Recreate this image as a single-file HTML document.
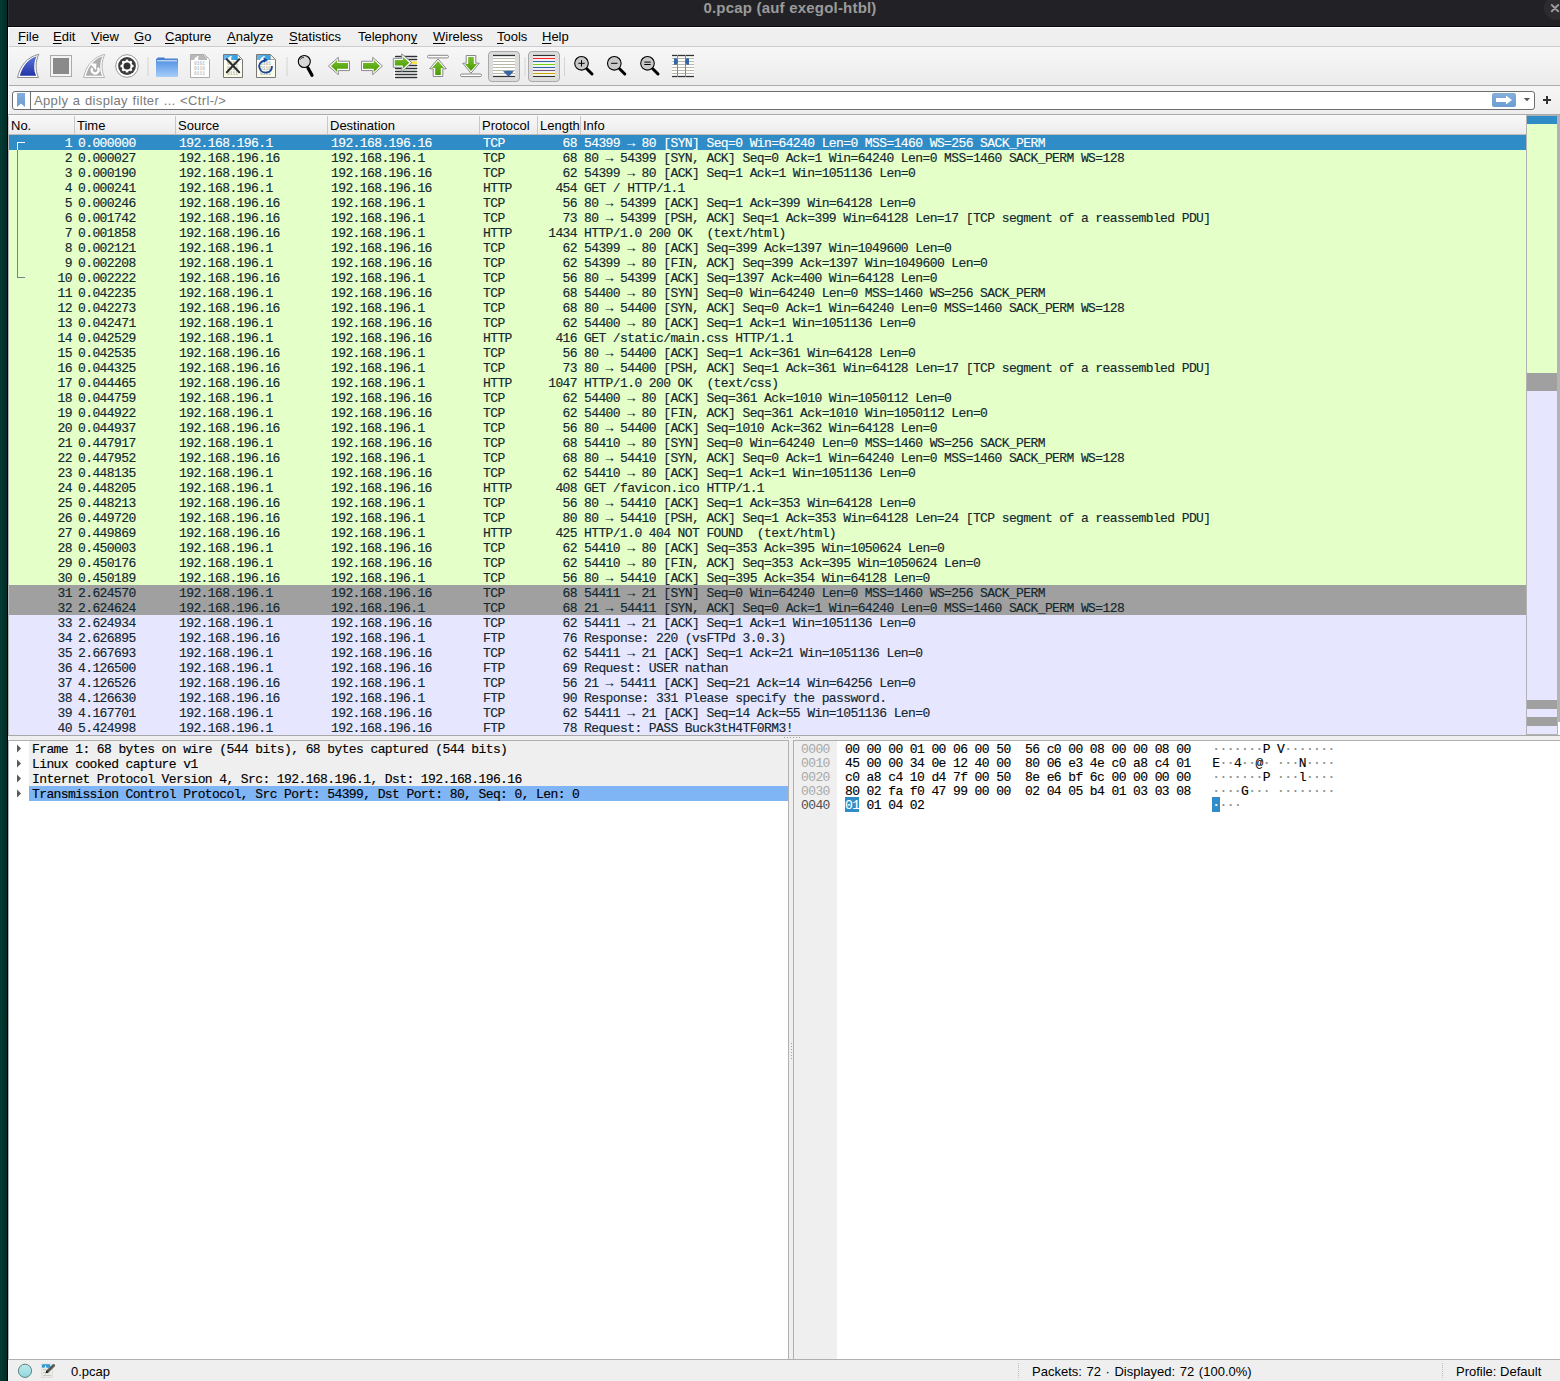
<!DOCTYPE html><html><head><meta charset="utf-8"><title>Wireshark</title><style>
*{margin:0;padding:0;box-sizing:border-box}
html,body{width:1560px;height:1381px;overflow:hidden;background:#efefef;font-family:"Liberation Sans",sans-serif;font-size:13px;color:#000;position:relative}
#edge{position:absolute;left:0;top:0;width:8px;height:1381px;background:linear-gradient(90deg,#043a33 0px,#022c27 7px,#000 7px,#000 8px)}
#wb1{position:absolute;left:8px;top:0;width:1px;height:26px;background:#2f2f33}
#wb2{position:absolute;left:8px;top:27px;width:1px;height:87px;background:#fff}
#titlebar{position:absolute;left:8px;top:0;width:1552px;height:27px;background:#222226;border-bottom:1px solid #0a0a0e}
#title{position:absolute;left:587px;top:-1px;width:390px;text-align:center;font-weight:bold;font-size:15px;letter-spacing:0.2px;line-height:18px;color:#9a9a9a}
#closebtn{position:absolute;left:1536px;top:-4px;width:24px;height:24px;border-radius:12px;background:#2c2c30}
#closebtn svg{position:absolute;left:0;top:4px}
#menubar{position:absolute;left:8px;top:27px;width:1552px;height:19px;background:#efefef;border-top:1px solid #fff}
.mi{position:absolute;top:1px;font-size:13px;line-height:16px;color:#000;margin-left:-8px}
.mi u{text-decoration:underline;text-underline-offset:2px}
#toolbar{position:absolute;left:8px;top:46px;width:1552px;height:40px;background:linear-gradient(#f7f7f7,#ececec);border-top:1px solid #cccccc;border-bottom:1px solid #ababab}
#toolbar .ic{position:absolute}
#plist{position:absolute;left:8px;top:114px;width:1552px;height:622px;background:#fff;border-top:1px solid #aaa}
#phead{position:absolute;left:8px;top:115px;width:1518px;height:20px;background:linear-gradient(#f9f9f9,#ebebeb);border-bottom:1px solid #c4bcb4}
.hc{position:absolute;top:116px;height:18px;border-left:1px solid #c8c8c8;font-size:13px;line-height:19px;padding-left:2px;white-space:nowrap;overflow:hidden}
.row{position:absolute;left:8px;width:1518px;height:15px;font-family:"Liberation Mono",monospace;font-size:13px;letter-spacing:-0.6px;line-height:15px;white-space:pre;color:#12272e;-webkit-text-stroke:0.15px}
.row span{position:absolute;top:1px}
.row.g{background:#e4ffc7}
.row.t{background:#e7e6ff}
.row.s{background:#a0a0a0}
.row.sel{background:#308cc6;color:#fff}
.cno{right:1454px;text-align:right}
.ct{left:70px}.cs{left:171px}.cd{left:323px}.cp{left:475px}
.cl{right:949px;text-align:right}
.ci{left:576px}
.brk{position:absolute}
.dt{position:absolute;padding-top:1px;left:32px;height:15px;font-family:"Liberation Mono",monospace;font-size:13px;letter-spacing:-0.6px;line-height:15px;white-space:pre;color:#000;-webkit-text-stroke:0.15px}
.off{position:absolute;padding-top:1px;left:801px;height:14px;font-family:"Liberation Mono",monospace;font-size:13px;letter-spacing:-0.6px;line-height:15px;white-space:pre;color:#a8a8a8}
.hx{position:absolute;padding-top:1px;left:845px;height:14px;font-family:"Liberation Mono",monospace;font-size:13px;letter-spacing:-0.6px;line-height:15px;white-space:pre;color:#000;-webkit-text-stroke:0.15px}
.hx i{font-style:normal;color:#8a8a8a}
.hx b{font-weight:normal}
.st{position:absolute;top:1363px;font-size:13px;line-height:17px;color:#000;white-space:pre}
.row b.ar{position:static;font-weight:bold}

</style></head><body>
<div id="edge"></div>
<div id="titlebar"><div id="title">0.pcap (auf exegol-htbl)</div><div id="closebtn"><svg width="24" height="24" viewBox="0 0 24 24"><path d="M7.8 5 L14.2 11.2 M14.2 5 L7.8 11.2" stroke="#9a9a9a" stroke-width="2" stroke-linecap="round"/></svg></div></div>
<div id="menubar">
<span class="mi" style="left:18px"><u>F</u>ile</span>
<span class="mi" style="left:53px"><u>E</u>dit</span>
<span class="mi" style="left:91px"><u>V</u>iew</span>
<span class="mi" style="left:134px"><u>G</u>o</span>
<span class="mi" style="left:165px"><u>C</u>apture</span>
<span class="mi" style="left:227px"><u>A</u>nalyze</span>
<span class="mi" style="left:289px"><u>S</u>tatistics</span>
<span class="mi" style="left:358px">Telephon<u>y</u></span>
<span class="mi" style="left:433px"><u>W</u>ireless</span>
<span class="mi" style="left:497px"><u>T</u>ools</span>
<span class="mi" style="left:542px"><u>H</u>elp</span>
</div>
<div id="toolbar"><svg style="position:absolute;left:-8px;top:-47px" width="720" height="90" viewBox="0 0 720 90">
<defs>
<linearGradient id="gblue" x1="0" y1="0" x2="0" y2="1"><stop offset="0" stop-color="#5a74d8"/><stop offset="1" stop-color="#2234a8"/></linearGradient>
<linearGradient id="ggreen" x1="0" y1="0" x2="0" y2="1"><stop offset="0" stop-color="#78c030"/><stop offset="1" stop-color="#4a9a00"/></linearGradient>
<linearGradient id="gfold" x1="0" y1="0" x2="0" y2="1"><stop offset="0" stop-color="#3a76c6"/><stop offset="0.25" stop-color="#5e9ae6"/><stop offset="1" stop-color="#a6cdfb"/></linearGradient>
<linearGradient id="gdochead" x1="0" y1="0" x2="1" y2="0"><stop offset="0" stop-color="#6ab8e8"/><stop offset="1" stop-color="#1a98e0"/></linearGradient>
<linearGradient id="gdocbody" x1="0" y1="0" x2="0" y2="1"><stop offset="0" stop-color="#ffffff"/><stop offset="1" stop-color="#fbfbe6"/></linearGradient>
</defs>
<!-- 1 shark fin -->
<path d="M17.5 77.5 C 20 66, 27 57, 38.8 54.3 C 35.5 61, 35 70, 38.5 77.5 Z" fill="#fff" stroke="#8c8c8c" stroke-width="1"/>
<path d="M19.8 75.8 C 22.5 66, 28.5 59, 36.5 56.3 C 33.8 62.5, 33.3 70, 36.2 75.8 Z" fill="url(#gblue)"/>
<!-- 2 stop -->
<rect x="50.5" y="55.5" width="21" height="21" fill="#f4f4f4" stroke="#ababab" stroke-width="1"/>
<rect x="53" y="58" width="16" height="16" fill="#8a8a8a"/>
<!-- 3 restart fin -->
<path d="M83.5 77.5 C 86 66, 93 57, 104.8 54.3 C 101.5 61, 101 70, 104.5 77.5 Z" fill="#fff" stroke="#b4b4b4" stroke-width="1"/>
<path d="M85.8 75.8 C 88.5 66, 94.5 59, 102.5 56.3 C 99.8 62.5, 99.3 70, 102.2 75.8 Z" fill="#adadad"/>
<path d="M92.37 68.05 A3.4 3.4 0 1 0 97.75 67.8" fill="none" stroke="#fff" stroke-width="2.3"/>
<path d="M89.9 63.6 L96.4 63.6 L96.1 70.2 Z" fill="#fff"/>
<!-- 4 gear -->
<circle cx="127" cy="66" r="11.3" fill="#fff" stroke="#9a9a9a" stroke-width="1"/>
<circle cx="127" cy="66" r="8.9" fill="#3c3c3c"/>
<circle cx="127" cy="66" r="6.6" fill="#fff"/><circle cx="133.10" cy="68.53" r="1.35" fill="#3c3c3c"/><circle cx="129.53" cy="72.10" r="1.35" fill="#3c3c3c"/><circle cx="124.47" cy="72.10" r="1.35" fill="#3c3c3c"/><circle cx="120.90" cy="68.53" r="1.35" fill="#3c3c3c"/><circle cx="120.90" cy="63.47" r="1.35" fill="#3c3c3c"/><circle cx="124.47" cy="59.90" r="1.35" fill="#3c3c3c"/><circle cx="129.53" cy="59.90" r="1.35" fill="#3c3c3c"/><circle cx="133.10" cy="63.47" r="1.35" fill="#3c3c3c"/>
<circle cx="127" cy="66" r="3.5" fill="#333"/>
<!-- sep -->
<rect x="147.5" y="57" width="1" height="19" fill="#d4d4d4"/>
<!-- 5 folder -->
<path d="M156 59.5 Q156 58.5 157 58.5 L158 57.5 L164 57.5 L165 58.5 L177 58.5 Q178 58.5 178 59.5 L178 76 Q178 77 177 77 L157 77 Q156 77 156 76 Z" fill="url(#gfold)"/>
<rect x="157" y="60.3" width="20" height="1" fill="#e8f0fa"/>
<!-- 6 doc grey -->
<path d="M190.5 54.5 L204.5 54.5 L209.5 59.5 L209.5 77.5 L190.5 77.5 Z" fill="#fff" stroke="#acacac" stroke-width="1"/>
<path d="M191 55 L204 55 L207 58 L207 60 L191 60 Z" fill="#b8b8b8"/>
<path d="M194 60 C 195 57, 197 56, 199 56 C 198 57.5, 198 59, 198.5 60 Z" fill="#fff"/>
<g font-family="Liberation Mono" font-size="4.6" fill="#c4c4c4" font-weight="bold"><text x="194" y="65">0101</text><text x="194" y="70">0110</text><text x="194" y="75">0111</text></g>
<!-- 7 doc close -->
<path d="M223.5 54.5 L237.5 54.5 L242.5 59.5 L242.5 77.5 L223.5 77.5 Z" fill="url(#gdocbody)" stroke="#777" stroke-width="1"/>
<path d="M224 55 L237 55 L241 59 L241 60 L224 60 Z" fill="url(#gdochead)"/>
<path d="M227 60 C 228 57.5, 230 56, 232 56 C 231 57.5, 231 59, 231.5 60 Z" fill="#fff"/>
<path d="M237.5 55 L237.5 59.5 L242 59.5" fill="#f4f4e8" stroke="#999" stroke-width="0.6"/>
<g font-family="Liberation Mono" font-size="4.6" fill="#b8b8b0" font-weight="bold"><text x="227" y="65">0101</text><text x="227" y="70">0110</text><text x="227" y="75">0111</text></g>
<path d="M226.8 59.3 L239.2 72.2 M239.2 59.3 L226.8 72.2" stroke="#2a2e30" stroke-width="2" stroke-linecap="round"/>
<!-- 8 doc reload -->
<path d="M256.5 54.5 L270.5 54.5 L275.5 59.5 L275.5 77.5 L256.5 77.5 Z" fill="url(#gdocbody)" stroke="#777" stroke-width="1"/>
<path d="M257 55 L270 55 L274 59 L274 60 L257 60 Z" fill="url(#gdochead)"/>
<path d="M260 60 C 261 57.5, 263 56, 265 56 C 264 57.5, 264 59, 264.5 60 Z" fill="#fff"/>
<path d="M270.5 55 L270.5 59.5 L275 59.5" fill="#f4f4e8" stroke="#999" stroke-width="0.6"/>
<g font-family="Liberation Mono" font-size="4.6" fill="#b8b8b0" font-weight="bold"><text x="260" y="65">0101</text><text x="260" y="70">0110</text><text x="260" y="75">0111</text></g>
<path d="M264.5 60.5 C 260 61.5, 258.5 65, 259.5 68 C 260.5 71.5, 264 73, 267 72.5 C 270 72, 272 69.5, 272 66" fill="none" stroke="#1a4898" stroke-width="1.8"/>
<path d="M263.5 57.5 L268 60 L264 62.5 Z" fill="#1a4898"/>
<!-- sep -->
<rect x="286.5" y="57" width="1" height="19" fill="#d4d4d4"/>
<!-- 9 magnifier -->
<path d="M308 68 L312 75.3" stroke="#000" stroke-width="3.2" stroke-linecap="round"/>
<circle cx="304.3" cy="61.5" r="6" fill="#d8d8d8" stroke="#000" stroke-width="1.1"/>
<path d="M300.5 59.5 C 301 58, 302.5 57.3, 304 57.5" stroke="#000" stroke-width="0.7" fill="none"/>
<!-- 10 left arrow -->
<path d="M328.5 66 L338.3 57.3 L338.3 61.2 L349.5 61.2 L349.5 70.6 L338.3 70.6 L338.3 74.7 Z" fill="#fff" stroke="#8a8a8a" stroke-width="1" stroke-linejoin="round"/>
<path d="M331 66 L337.2 60 L337.2 63 L348 63 L348 68.8 L337.2 68.8 L337.2 72 Z" fill="url(#ggreen)"/>
<!-- 11 right arrow -->
<path d="M382.5 66 L372.7 57.3 L372.7 61.2 L361.5 61.2 L361.5 70.6 L372.7 70.6 L372.7 74.7 Z" fill="#fff" stroke="#8a8a8a" stroke-width="1" stroke-linejoin="round"/>
<path d="M380 66 L373.8 60 L373.8 63 L363 63 L363 68.8 L373.8 68.8 L373.8 72 Z" fill="url(#ggreen)"/>
<!-- 12 go to packet -->
<rect x="394" y="55" width="24" height="23.5" fill="#fff"/>
<g stroke="#2e3436" stroke-width="1.3" stroke-linecap="round"><path d="M395.5 56.5 H416.8"/><path d="M395.5 59.5 H416.8"/><path d="M395.5 65.5 H416.8"/><path d="M395.5 68.5 H416.8"/><path d="M395.5 71.5 H416.8"/><path d="M395.5 74.5 H416.8"/><path d="M395.5 77.5 H416.8"/></g>
<rect x="411" y="61.3" width="6" height="2.6" fill="#f8e040"/>
<path d="M411.8 62.7 L401.8 53.8 L401.8 58.3 L393.3 58.3 L393.3 67.3 L401.8 67.3 L401.8 71.6 Z" fill="#fff" stroke="#8a8a8a" stroke-width="1" stroke-linejoin="round"/>
<path d="M409.3 62.7 L402.8 56.8 L402.8 60 L394.8 60 L394.8 65.6 L402.8 65.6 L402.8 68.8 Z" fill="url(#ggreen)"/>
<!-- 13 first packet -->
<rect x="427.5" y="55.3" width="21" height="2.6" rx="1.3" fill="#fff" stroke="#888" stroke-width="1"/>
<path d="M438 58.8 L446.3 68.8 L442.8 68.8 L442.8 76.5 L433.2 76.5 L433.2 68.8 L429.7 68.8 Z" fill="#fff" stroke="#888" stroke-width="1" stroke-linejoin="round"/>
<path d="M438 61 L444 68 L440.8 68 L440.8 75 L435.2 75 L435.2 68 L432 68 Z" fill="url(#ggreen)"/>
<!-- 14 last packet -->
<rect x="460.5" y="74" width="21" height="2.6" rx="1.3" fill="#fff" stroke="#888" stroke-width="1"/>
<path d="M471 73.2 L479.3 63.2 L475.8 63.2 L475.8 55.5 L466.2 55.5 L466.2 63.2 L462.7 63.2 Z" fill="#fff" stroke="#888" stroke-width="1" stroke-linejoin="round"/>
<path d="M471 71 L477 64 L473.8 64 L473.8 57 L468.2 57 L468.2 64 L465 64 Z" fill="url(#ggreen)"/>
<!-- 15 autoscroll pressed -->
<rect x="488.5" y="51.5" width="31" height="30" rx="3.5" fill="#dcdcdc" stroke="#a9a9a9" stroke-width="1"/>
<rect x="493" y="55" width="22" height="22.5" fill="#fff"/>
<g stroke-width="1" stroke="#b8b8a8"><path d="M493 58.5 H515"/><path d="M493 61.5 H515"/><path d="M493 64.5 H515"/><path d="M493 67.5 H515"/><path d="M493 70.5 H515"/><path d="M493 73.5 H515"/></g>
<g stroke-width="1.3" stroke="#2e3436"><path d="M493 55.5 H515"/><path d="M493 76.5 H515"/></g>
<path d="M503 71.2 Q508.5 70.2 514 71.2 L508.6 76.8 Z" fill="#3465a4"/>
<rect x="524.5" y="57" width="1" height="19" fill="#d4d4d4"/>
<!-- 16 colorize pressed -->
<rect x="528.5" y="51.5" width="31" height="30" rx="3.5" fill="#dcdcdc" stroke="#a9a9a9" stroke-width="1"/>
<rect x="533" y="55" width="22" height="22.5" fill="#fff"/>
<g stroke-width="1.2"><path d="M533 55.5 H555" stroke="#2e3436"/><path d="M533 58.5 H555" stroke="#ef2929"/><path d="M533 61.5 H555" stroke="#3465a4"/><path d="M533 64.5 H555" stroke="#73d216"/><path d="M533 67.5 H555" stroke="#3465a4"/><path d="M533 70.5 H555" stroke="#75507b"/><path d="M533 73.5 H555" stroke="#c4a000"/><path d="M533 76.5 H555" stroke="#2e3436"/></g>
<rect x="564" y="57" width="1" height="19" fill="#d4d4d4"/>
<!-- 17 zoom in -->
<path d="M586.5 68.5 L592 74" stroke="#000" stroke-width="3" stroke-linecap="round"/>
<circle cx="581.5" cy="63.3" r="6.8" fill="#c8c8c8" stroke="#000" stroke-width="1.1"/>
<path d="M578.3 63.3 H584.7 M581.5 60.1 V66.5" stroke="#000" stroke-width="1"/>
<!-- 18 zoom out -->
<path d="M619.3 68.5 L624.8 74" stroke="#000" stroke-width="3" stroke-linecap="round"/>
<circle cx="614.3" cy="63.3" r="6.8" fill="#c8c8c8" stroke="#000" stroke-width="1.1"/>
<path d="M611.1 63.3 H617.5" stroke="#000" stroke-width="1"/>
<!-- 19 normal size -->
<path d="M652.5 68.5 L658 74" stroke="#000" stroke-width="3" stroke-linecap="round"/>
<circle cx="647.5" cy="63.3" r="6.8" fill="#c8c8c8" stroke="#000" stroke-width="1.1"/>
<path d="M644.3 62.1 H650.7 M644.3 64.5 H650.7" stroke="#000" stroke-width="1"/>
<!-- 20 resize columns -->
<rect x="672" y="55" width="22" height="22" fill="#fff"/>
<g stroke="#b8b8a8" stroke-width="1"><path d="M672 58.5 H694"/><path d="M672 61.5 H694"/><path d="M672 64.5 H694"/><path d="M672 67.5 H694"/><path d="M672 70.5 H694"/><path d="M672 73.5 H694"/></g>
<g stroke="#2e3436" stroke-width="1.3"><path d="M672 55.5 H694"/><path d="M672 76.5 H694"/></g>
<g stroke="#888" stroke-width="1"><path d="M677.5 55 V77"/><path d="M685.5 55 V77"/></g>
<path d="M674 58.2 L676.5 58.2 L678 61.5 L676.5 64.8 L674 64.8 Z" fill="#3465a4"/>
<path d="M689 58.2 L686.5 58.2 L685 61.5 L686.5 64.8 L689 64.8 Z" fill="#3465a4"/>
</svg>
</div>
<div id="filterbar" style="position:absolute;left:8px;top:86px;width:1552px;height:28px;background:linear-gradient(#f6f6f6,#ededed)"></div>
<div style="position:absolute;left:12px;top:91px;width:1523px;height:19px;background:#fff;border:1px solid #6e6e6e;border-radius:3px"></div>
<div style="position:absolute;left:30px;top:92px;width:1px;height:17px;background:#6e6e6e"></div>
<svg style="position:absolute;left:0;top:86px" width="1560" height="28" viewBox="0 86 1560 28">
<defs><linearGradient id="gbm" x1="0" y1="0" x2="0" y2="1"><stop offset="0" stop-color="#86aedb"/><stop offset="1" stop-color="#6b9cd2"/></linearGradient></defs>
<path d="M17 93 L25 93 L25 107 L21 103.5 L17 107 Z" fill="url(#gbm)"/>
<rect x="1492" y="93" width="24" height="14" rx="2" fill="url(#gbm)"/>
<path d="M1496 98 L1506 98 L1506 95.5 L1512 100 L1506 104.5 L1506 102 L1496 102 Z" fill="#fff"/>
<path d="M1523.8 98 L1530 98 L1527 101.2 Z" fill="#555"/>
<path d="M1543 100 H1551 M1547 96 V104" stroke="#333" stroke-width="2"/>
</svg>
<div style="position:absolute;left:34px;top:92px;font-size:13px;line-height:17px;color:#7a7a7a;letter-spacing:0.35px;word-spacing:0.6px">Apply a display filter ... &lt;Ctrl-/&gt;</div>
<div style="position:absolute;left:8px;top:114px;width:1552px;height:1px;background:#a8a8a8"></div>

<div id="plist"></div>
<div id="phead"></div>
<div class="hc" style="left:8px;width:67px"><span>No.</span></div>
<div class="hc" style="left:74px;width:101px"><span>Time</span></div>
<div class="hc" style="left:175px;width:152px"><span>Source</span></div>
<div class="hc" style="left:327px;width:152px"><span>Destination</span></div>
<div class="hc" style="left:479px;width:58px"><span>Protocol</span></div>
<div class="hc" style="left:537px;width:43px"><span>Length</span></div>
<div class="hc" style="left:580px;width:946px"><span>Info</span></div>
<div class="row sel" style="top:135px"><span class="cno">1</span><span class="ct">0.000000</span><span class="cs">192.168.196.1</span><span class="cd">192.168.196.16</span><span class="cp">TCP</span><span class="cl">68</span><span class="ci">54399 <b class="ar">→</b> 80 [SYN] Seq=0 Win=64240 Len=0 MSS=1460 WS=256 SACK_PERM</span></div>
<div class="row g" style="top:150px"><span class="cno">2</span><span class="ct">0.000027</span><span class="cs">192.168.196.16</span><span class="cd">192.168.196.1</span><span class="cp">TCP</span><span class="cl">68</span><span class="ci">80 <b class="ar">→</b> 54399 [SYN, ACK] Seq=0 Ack=1 Win=64240 Len=0 MSS=1460 SACK_PERM WS=128</span></div>
<div class="row g" style="top:165px"><span class="cno">3</span><span class="ct">0.000190</span><span class="cs">192.168.196.1</span><span class="cd">192.168.196.16</span><span class="cp">TCP</span><span class="cl">62</span><span class="ci">54399 <b class="ar">→</b> 80 [ACK] Seq=1 Ack=1 Win=1051136 Len=0</span></div>
<div class="row g" style="top:180px"><span class="cno">4</span><span class="ct">0.000241</span><span class="cs">192.168.196.1</span><span class="cd">192.168.196.16</span><span class="cp">HTTP</span><span class="cl">454</span><span class="ci">GET / HTTP/1.1</span></div>
<div class="row g" style="top:195px"><span class="cno">5</span><span class="ct">0.000246</span><span class="cs">192.168.196.16</span><span class="cd">192.168.196.1</span><span class="cp">TCP</span><span class="cl">56</span><span class="ci">80 <b class="ar">→</b> 54399 [ACK] Seq=1 Ack=399 Win=64128 Len=0</span></div>
<div class="row g" style="top:210px"><span class="cno">6</span><span class="ct">0.001742</span><span class="cs">192.168.196.16</span><span class="cd">192.168.196.1</span><span class="cp">TCP</span><span class="cl">73</span><span class="ci">80 <b class="ar">→</b> 54399 [PSH, ACK] Seq=1 Ack=399 Win=64128 Len=17 [TCP segment of a reassembled PDU]</span></div>
<div class="row g" style="top:225px"><span class="cno">7</span><span class="ct">0.001858</span><span class="cs">192.168.196.16</span><span class="cd">192.168.196.1</span><span class="cp">HTTP</span><span class="cl">1434</span><span class="ci">HTTP/1.0 200 OK &nbsp;(text/html)</span></div>
<div class="row g" style="top:240px"><span class="cno">8</span><span class="ct">0.002121</span><span class="cs">192.168.196.1</span><span class="cd">192.168.196.16</span><span class="cp">TCP</span><span class="cl">62</span><span class="ci">54399 <b class="ar">→</b> 80 [ACK] Seq=399 Ack=1397 Win=1049600 Len=0</span></div>
<div class="row g" style="top:255px"><span class="cno">9</span><span class="ct">0.002208</span><span class="cs">192.168.196.1</span><span class="cd">192.168.196.16</span><span class="cp">TCP</span><span class="cl">62</span><span class="ci">54399 <b class="ar">→</b> 80 [FIN, ACK] Seq=399 Ack=1397 Win=1049600 Len=0</span></div>
<div class="row g" style="top:270px"><span class="cno">10</span><span class="ct">0.002222</span><span class="cs">192.168.196.16</span><span class="cd">192.168.196.1</span><span class="cp">TCP</span><span class="cl">56</span><span class="ci">80 <b class="ar">→</b> 54399 [ACK] Seq=1397 Ack=400 Win=64128 Len=0</span></div>
<div class="row g" style="top:285px"><span class="cno">11</span><span class="ct">0.042235</span><span class="cs">192.168.196.1</span><span class="cd">192.168.196.16</span><span class="cp">TCP</span><span class="cl">68</span><span class="ci">54400 <b class="ar">→</b> 80 [SYN] Seq=0 Win=64240 Len=0 MSS=1460 WS=256 SACK_PERM</span></div>
<div class="row g" style="top:300px"><span class="cno">12</span><span class="ct">0.042273</span><span class="cs">192.168.196.16</span><span class="cd">192.168.196.1</span><span class="cp">TCP</span><span class="cl">68</span><span class="ci">80 <b class="ar">→</b> 54400 [SYN, ACK] Seq=0 Ack=1 Win=64240 Len=0 MSS=1460 SACK_PERM WS=128</span></div>
<div class="row g" style="top:315px"><span class="cno">13</span><span class="ct">0.042471</span><span class="cs">192.168.196.1</span><span class="cd">192.168.196.16</span><span class="cp">TCP</span><span class="cl">62</span><span class="ci">54400 <b class="ar">→</b> 80 [ACK] Seq=1 Ack=1 Win=1051136 Len=0</span></div>
<div class="row g" style="top:330px"><span class="cno">14</span><span class="ct">0.042529</span><span class="cs">192.168.196.1</span><span class="cd">192.168.196.16</span><span class="cp">HTTP</span><span class="cl">416</span><span class="ci">GET /static/main.css HTTP/1.1</span></div>
<div class="row g" style="top:345px"><span class="cno">15</span><span class="ct">0.042535</span><span class="cs">192.168.196.16</span><span class="cd">192.168.196.1</span><span class="cp">TCP</span><span class="cl">56</span><span class="ci">80 <b class="ar">→</b> 54400 [ACK] Seq=1 Ack=361 Win=64128 Len=0</span></div>
<div class="row g" style="top:360px"><span class="cno">16</span><span class="ct">0.044325</span><span class="cs">192.168.196.16</span><span class="cd">192.168.196.1</span><span class="cp">TCP</span><span class="cl">73</span><span class="ci">80 <b class="ar">→</b> 54400 [PSH, ACK] Seq=1 Ack=361 Win=64128 Len=17 [TCP segment of a reassembled PDU]</span></div>
<div class="row g" style="top:375px"><span class="cno">17</span><span class="ct">0.044465</span><span class="cs">192.168.196.16</span><span class="cd">192.168.196.1</span><span class="cp">HTTP</span><span class="cl">1047</span><span class="ci">HTTP/1.0 200 OK &nbsp;(text/css)</span></div>
<div class="row g" style="top:390px"><span class="cno">18</span><span class="ct">0.044759</span><span class="cs">192.168.196.1</span><span class="cd">192.168.196.16</span><span class="cp">TCP</span><span class="cl">62</span><span class="ci">54400 <b class="ar">→</b> 80 [ACK] Seq=361 Ack=1010 Win=1050112 Len=0</span></div>
<div class="row g" style="top:405px"><span class="cno">19</span><span class="ct">0.044922</span><span class="cs">192.168.196.1</span><span class="cd">192.168.196.16</span><span class="cp">TCP</span><span class="cl">62</span><span class="ci">54400 <b class="ar">→</b> 80 [FIN, ACK] Seq=361 Ack=1010 Win=1050112 Len=0</span></div>
<div class="row g" style="top:420px"><span class="cno">20</span><span class="ct">0.044937</span><span class="cs">192.168.196.16</span><span class="cd">192.168.196.1</span><span class="cp">TCP</span><span class="cl">56</span><span class="ci">80 <b class="ar">→</b> 54400 [ACK] Seq=1010 Ack=362 Win=64128 Len=0</span></div>
<div class="row g" style="top:435px"><span class="cno">21</span><span class="ct">0.447917</span><span class="cs">192.168.196.1</span><span class="cd">192.168.196.16</span><span class="cp">TCP</span><span class="cl">68</span><span class="ci">54410 <b class="ar">→</b> 80 [SYN] Seq=0 Win=64240 Len=0 MSS=1460 WS=256 SACK_PERM</span></div>
<div class="row g" style="top:450px"><span class="cno">22</span><span class="ct">0.447952</span><span class="cs">192.168.196.16</span><span class="cd">192.168.196.1</span><span class="cp">TCP</span><span class="cl">68</span><span class="ci">80 <b class="ar">→</b> 54410 [SYN, ACK] Seq=0 Ack=1 Win=64240 Len=0 MSS=1460 SACK_PERM WS=128</span></div>
<div class="row g" style="top:465px"><span class="cno">23</span><span class="ct">0.448135</span><span class="cs">192.168.196.1</span><span class="cd">192.168.196.16</span><span class="cp">TCP</span><span class="cl">62</span><span class="ci">54410 <b class="ar">→</b> 80 [ACK] Seq=1 Ack=1 Win=1051136 Len=0</span></div>
<div class="row g" style="top:480px"><span class="cno">24</span><span class="ct">0.448205</span><span class="cs">192.168.196.1</span><span class="cd">192.168.196.16</span><span class="cp">HTTP</span><span class="cl">408</span><span class="ci">GET /favicon.ico HTTP/1.1</span></div>
<div class="row g" style="top:495px"><span class="cno">25</span><span class="ct">0.448213</span><span class="cs">192.168.196.16</span><span class="cd">192.168.196.1</span><span class="cp">TCP</span><span class="cl">56</span><span class="ci">80 <b class="ar">→</b> 54410 [ACK] Seq=1 Ack=353 Win=64128 Len=0</span></div>
<div class="row g" style="top:510px"><span class="cno">26</span><span class="ct">0.449720</span><span class="cs">192.168.196.16</span><span class="cd">192.168.196.1</span><span class="cp">TCP</span><span class="cl">80</span><span class="ci">80 <b class="ar">→</b> 54410 [PSH, ACK] Seq=1 Ack=353 Win=64128 Len=24 [TCP segment of a reassembled PDU]</span></div>
<div class="row g" style="top:525px"><span class="cno">27</span><span class="ct">0.449869</span><span class="cs">192.168.196.16</span><span class="cd">192.168.196.1</span><span class="cp">HTTP</span><span class="cl">425</span><span class="ci">HTTP/1.0 404 NOT FOUND &nbsp;(text/html)</span></div>
<div class="row g" style="top:540px"><span class="cno">28</span><span class="ct">0.450003</span><span class="cs">192.168.196.1</span><span class="cd">192.168.196.16</span><span class="cp">TCP</span><span class="cl">62</span><span class="ci">54410 <b class="ar">→</b> 80 [ACK] Seq=353 Ack=395 Win=1050624 Len=0</span></div>
<div class="row g" style="top:555px"><span class="cno">29</span><span class="ct">0.450176</span><span class="cs">192.168.196.1</span><span class="cd">192.168.196.16</span><span class="cp">TCP</span><span class="cl">62</span><span class="ci">54410 <b class="ar">→</b> 80 [FIN, ACK] Seq=353 Ack=395 Win=1050624 Len=0</span></div>
<div class="row g" style="top:570px"><span class="cno">30</span><span class="ct">0.450189</span><span class="cs">192.168.196.16</span><span class="cd">192.168.196.1</span><span class="cp">TCP</span><span class="cl">56</span><span class="ci">80 <b class="ar">→</b> 54410 [ACK] Seq=395 Ack=354 Win=64128 Len=0</span></div>
<div class="row s" style="top:585px"><span class="cno">31</span><span class="ct">2.624570</span><span class="cs">192.168.196.1</span><span class="cd">192.168.196.16</span><span class="cp">TCP</span><span class="cl">68</span><span class="ci">54411 <b class="ar">→</b> 21 [SYN] Seq=0 Win=64240 Len=0 MSS=1460 WS=256 SACK_PERM</span></div>
<div class="row s" style="top:600px"><span class="cno">32</span><span class="ct">2.624624</span><span class="cs">192.168.196.16</span><span class="cd">192.168.196.1</span><span class="cp">TCP</span><span class="cl">68</span><span class="ci">21 <b class="ar">→</b> 54411 [SYN, ACK] Seq=0 Ack=1 Win=64240 Len=0 MSS=1460 SACK_PERM WS=128</span></div>
<div class="row t" style="top:615px"><span class="cno">33</span><span class="ct">2.624934</span><span class="cs">192.168.196.1</span><span class="cd">192.168.196.16</span><span class="cp">TCP</span><span class="cl">62</span><span class="ci">54411 <b class="ar">→</b> 21 [ACK] Seq=1 Ack=1 Win=1051136 Len=0</span></div>
<div class="row t" style="top:630px"><span class="cno">34</span><span class="ct">2.626895</span><span class="cs">192.168.196.16</span><span class="cd">192.168.196.1</span><span class="cp">FTP</span><span class="cl">76</span><span class="ci">Response: 220 (vsFTPd 3.0.3)</span></div>
<div class="row t" style="top:645px"><span class="cno">35</span><span class="ct">2.667693</span><span class="cs">192.168.196.1</span><span class="cd">192.168.196.16</span><span class="cp">TCP</span><span class="cl">62</span><span class="ci">54411 <b class="ar">→</b> 21 [ACK] Seq=1 Ack=21 Win=1051136 Len=0</span></div>
<div class="row t" style="top:660px"><span class="cno">36</span><span class="ct">4.126500</span><span class="cs">192.168.196.1</span><span class="cd">192.168.196.16</span><span class="cp">FTP</span><span class="cl">69</span><span class="ci">Request: USER nathan</span></div>
<div class="row t" style="top:675px"><span class="cno">37</span><span class="ct">4.126526</span><span class="cs">192.168.196.16</span><span class="cd">192.168.196.1</span><span class="cp">TCP</span><span class="cl">56</span><span class="ci">21 <b class="ar">→</b> 54411 [ACK] Seq=21 Ack=14 Win=64256 Len=0</span></div>
<div class="row t" style="top:690px"><span class="cno">38</span><span class="ct">4.126630</span><span class="cs">192.168.196.16</span><span class="cd">192.168.196.1</span><span class="cp">FTP</span><span class="cl">90</span><span class="ci">Response: 331 Please specify the password.</span></div>
<div class="row t" style="top:705px"><span class="cno">39</span><span class="ct">4.167701</span><span class="cs">192.168.196.1</span><span class="cd">192.168.196.16</span><span class="cp">TCP</span><span class="cl">62</span><span class="ci">54411 <b class="ar">→</b> 21 [ACK] Seq=14 Ack=55 Win=1051136 Len=0</span></div>
<div class="row t" style="top:720px"><span class="cno">40</span><span class="ct">5.424998</span><span class="cs">192.168.196.1</span><span class="cd">192.168.196.16</span><span class="cp">FTP</span><span class="cl">78</span><span class="ci">Request: PASS Buck3tH4TF0RM3!</span></div>
<div class="brk" style="left:17px;top:142px;width:8px;height:1px;background:#fff"></div>
<div class="brk" style="left:17px;top:142px;width:1px;height:8px;background:#fff"></div>
<div class="brk" style="left:17px;top:150px;width:1px;height:127px;background:#7a8088"></div>
<div class="brk" style="left:17px;top:277px;width:8px;height:1px;background:#7a8088"></div>
<div style="position:absolute;left:1526px;top:115px;width:34px;height:621px;background:#b3b3b3"></div>
<div style="position:absolute;left:1527px;top:116px;width:30px;height:618px;background:#e7e6ff"></div>
<div style="position:absolute;left:1527px;top:124px;width:30px;height:249px;background:#e4ffc7"></div>
<div style="position:absolute;left:1527px;top:116px;width:30px;height:8px;background:#308cc6"></div>
<div style="position:absolute;left:1527px;top:373px;width:30px;height:18px;background:#a0a0a0"></div>
<div style="position:absolute;left:1527px;top:700px;width:30px;height:9px;background:#a0a0a0"></div>
<div style="position:absolute;left:1527px;top:717px;width:30px;height:9px;background:#a0a0a0"></div>
<div style="position:absolute;left:1558px;top:722px;width:2px;height:13px;background:#fff"></div>

<div style="position:absolute;left:8px;top:735px;width:1552px;height:1px;background:#a8a8a8"></div>
<div style="position:absolute;left:8px;top:135px;width:1px;height:600px;background:#b4b4b4"></div>
<div style="position:absolute;left:8px;top:736px;width:1552px;height:4px;background:#efefef"></div>
<svg style="position:absolute;left:784px;top:737px" width="18" height="2"><g fill="#a0a0a0"><rect x="0" y="0" width="1" height="1"/><rect x="3" y="0" width="1" height="1"/><rect x="6" y="0" width="1" height="1"/><rect x="9" y="0" width="1" height="1"/><rect x="12" y="0" width="1" height="1"/><rect x="15" y="0" width="1" height="1"/></g></svg>
<div id="detail" style="position:absolute;left:8px;top:740px;width:781px;height:620px;background:#fff;border:1px solid #b0b0b0"></div>
<div style="position:absolute;left:789px;top:740px;width:4px;height:620px;background:#efefef"></div>
<svg style="position:absolute;left:791px;top:1043px" width="2" height="18"><g fill="#a0a0a0"><rect x="0" y="0" width="1" height="1"/><rect x="0" y="3" width="1" height="1"/><rect x="0" y="6" width="1" height="1"/><rect x="0" y="9" width="1" height="1"/><rect x="0" y="12" width="1" height="1"/><rect x="0" y="15" width="1" height="1"/></g></svg>
<div style="position:absolute;left:29px;top:741px;width:759px;height:45px;background:#efefef"></div>
<div style="position:absolute;left:29px;top:786px;width:759px;height:15px;background:#80b5f5"></div>
<svg style="position:absolute;left:0;top:740px" width="30" height="70" viewBox="0 740 30 70"><g fill="#585858">
<path d="M17 744.5 L21 748.5 L17 752.5 Z"/><path d="M17 759.5 L21 763.5 L17 767.5 Z"/><path d="M17 774.5 L21 778.5 L17 782.5 Z"/><path d="M17 789.5 L21 793.5 L17 797.5 Z"/></g></svg>
<div class="dt" style="top:741px">Frame 1: 68 bytes on wire (544 bits), 68 bytes captured (544 bits)</div>
<div class="dt" style="top:756px">Linux cooked capture v1</div>
<div class="dt" style="top:771px">Internet Protocol Version 4, Src: 192.168.196.1, Dst: 192.168.196.16</div>
<div class="dt" style="top:786px">Transmission Control Protocol, Src Port: 54399, Dst Port: 80, Seq: 0, Len: 0</div>

<div id="bytes" style="position:absolute;left:793px;top:740px;width:767px;height:620px;background:#fff;border:1px solid #b0b0b0;border-right:none"></div>
<div style="position:absolute;left:794px;top:741px;width:43px;height:618px;background:#efefef"></div>
<div class="off" style="top:741px">0000</div>
<div class="off" style="top:755px">0010</div>
<div class="off" style="top:769px">0020</div>
<div class="off" style="top:783px">0030</div>
<div class="off" style="top:797px;color:#505050">0040</div>
<div style="position:absolute;left:845px;top:797px;width:14px;height:15px;background:#308cc6"></div>
<div style="position:absolute;left:1212px;top:797px;width:8px;height:15px;background:#308cc6"></div>
<div class="hx" style="top:741px">00 00 00 01 00 06 00 50  56 c0 00 08 00 00 08 00   <i>·······</i>P <b>V</b><i>·······</i></div>
<div class="hx" style="top:755px">45 00 00 34 0e 12 40 00  80 06 e3 4e c0 a8 c4 01   E<i>··</i>4<i>··</i>@<i>·</i> <i>···</i>N<i>····</i></div>
<div class="hx" style="top:769px">c0 a8 c4 10 d4 7f 00 50  8e e6 bf 6c 00 00 00 00   <i>·······</i>P <i>···</i>l<i>····</i></div>
<div class="hx" style="top:783px">80 02 fa f0 47 99 00 00  02 04 05 b4 01 03 03 08   <i>····</i>G<i>···</i> <i>········</i></div>
<div class="hx" style="top:797px"><span style="color:#fff">01</span> 01 04 02                                        <i style="color:#fff">·</i><i>···</i></div>

<div style="position:absolute;left:8px;top:1359px;width:1552px;height:1px;background:#b0b0b0"></div>
<div id="status" style="position:absolute;left:8px;top:1360px;width:1552px;height:21px;background:#efefef"></div>
<svg style="position:absolute;left:0;top:1360px" width="60" height="21" viewBox="0 1360 60 21">
<defs><linearGradient id="gst" x1="0" y1="0" x2="0" y2="1"><stop offset="0" stop-color="#bdeaea"/><stop offset="1" stop-color="#8fd8e0"/></linearGradient></defs>
<circle cx="25" cy="1370.8" r="6.6" fill="url(#gst)" stroke="#4e7676" stroke-width="0.9"/>
<rect x="41.5" y="1364" width="11" height="13.6" fill="#ecece6" stroke="#d4d4d0" stroke-width="0.6"/>
<rect x="42" y="1364.2" width="8.2" height="3.5" rx="0.8" fill="#2e9ad8"/>
<path d="M44.5 1367.7 L45.5 1365.2 L46.5 1367.7 Z" fill="#fff"/>
<g fill="#c8c8c4"><rect x="43" y="1369" width="3" height="1.2"/><rect x="43" y="1372" width="2" height="1.2"/><rect x="43" y="1375" width="8" height="1"/></g>
<path d="M47.5 1371.3 L53.6 1365.5" stroke="#555a55" stroke-width="3" stroke-linecap="round"/>
<path d="M45.3 1373.6 L46.6 1370.4 L48.4 1372.2 Z" fill="#111"/>
</svg>
<div class="st" style="left:71px">0.pcap</div>
<svg style="position:absolute;left:1018px;top:1363px" width="2" height="16"><g fill="#c0c0c0"><rect x="0" y="0" width="1" height="1"/><rect x="0" y="2" width="1" height="1"/><rect x="0" y="4" width="1" height="1"/><rect x="0" y="6" width="1" height="1"/><rect x="0" y="8" width="1" height="1"/><rect x="0" y="10" width="1" height="1"/><rect x="0" y="12" width="1" height="1"/><rect x="0" y="14" width="1" height="1"/></g></svg>
<div class="st" style="left:1032px;word-spacing:1px">Packets: 72 · Displayed: 72 (100.0%)</div>
<svg style="position:absolute;left:1442px;top:1363px" width="2" height="16"><g fill="#c0c0c0"><rect x="0" y="0" width="1" height="1"/><rect x="0" y="2" width="1" height="1"/><rect x="0" y="4" width="1" height="1"/><rect x="0" y="6" width="1" height="1"/><rect x="0" y="8" width="1" height="1"/><rect x="0" y="10" width="1" height="1"/><rect x="0" y="12" width="1" height="1"/><rect x="0" y="14" width="1" height="1"/></g></svg>
<div class="st" style="left:1456px">Profile: Default</div>

<div id="wb1"></div><div id="wb2"></div>
</body></html>
